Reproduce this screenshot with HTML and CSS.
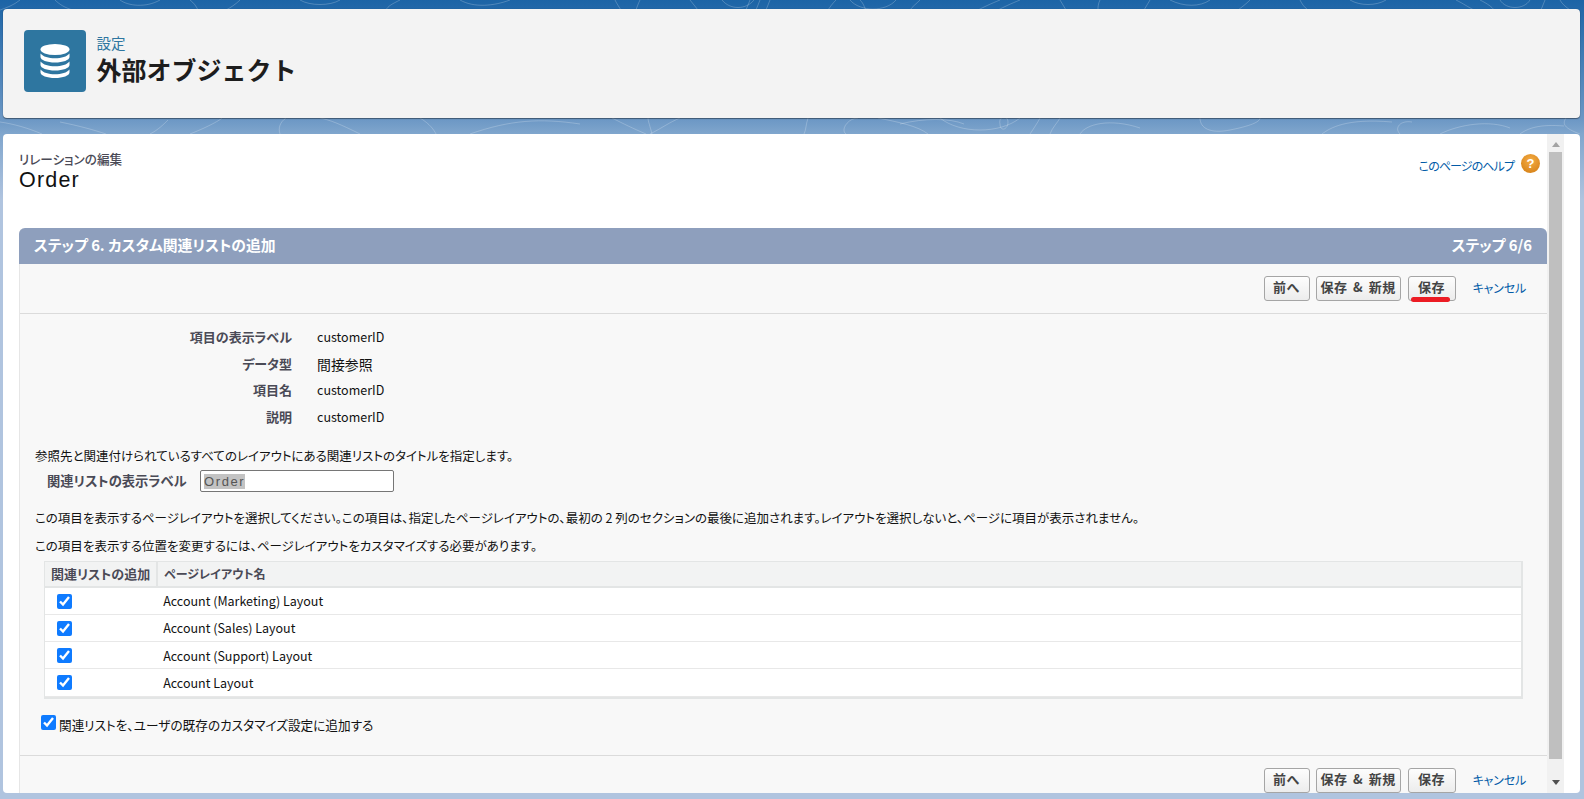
FILE: index.html
```html
<!DOCTYPE html>
<html lang="ja">
<head>
<meta charset="utf-8">
<title>外部オブジェクト</title>
<link rel="stylesheet" href="styles.css">
</head>
<body>
<svg class="swirls" width="1584" height="140" viewBox="0 0 1584 140" fill="none" stroke="#fff" stroke-opacity=".22" stroke-width="1">
  <path d="M20 0c-6 5-14 8-20 10M55 0c4 4 10 8 18 10M120 0c8 6 26 8 40 0M190 0c4 3 6 6 8 10M240 0c-4 4-10 8-14 10M300 0c10 6 30 6 40 0M400 0c-8 4-12 6-14 10M460 0c14 8 34 6 50 0M615 0c2 4 4 7 6 10M640 0c-2 4-3 7-4 10M690 0l8 10M722 0c8 10 24 10 32 0M750 0l-4 10M760 0l-4 10M770 0l-4 10M836 0c-4 4-6 7-8 10M860 0c4 4 4 7 6 10M850 0c10 12 36 12 46 0M920 0c-4 4-8 7-10 10M1000 0c-10 4-16 7-22 10M1020 0c-10 4-16 7-22 10M1060 0l6 10M1100 0c-2 4-2 7-2 10M1150 0l-6 10M1170 0c14 7 30 7 40 0M1250 0c-4 4-8 7-12 10M1300 0c2 4 4 7 8 10M1350 0c10 6 26 6 36 0M1456 0c8 4 12 7 18 10M1480 0c8 4 12 7 14 10M1500 0c6 10 24 10 30 0M1545 0l-4 10M1560 0c2 4 6 7 10 10"/>
  <path d="M0 122c14 2 28 6 42 12M60 122c20 4 34 8 46 12M150 134c8-4 14-10 18-14M190 134c20-8 30-14 32-16M280 134c-2-6 0-12 6-16M360 134c-20-10-30-14-40-16M420 118c10 6 14 12 16 16M470 134c40-14 70-16 110-10M612 118c12 6 20 10 34 16M648 118c0 3 2 8 4 16M680 118c-10 4-18 10-30 16M808 118c-2 6-2 12-4 16M846 134c-6-4 2-16 12-16M878 118c20 4 40 8 50 16M900 124c24-6 50-6 64 0M1000 124c-2-8 8-10 8-2s-8 10-8 2zM940 118c20 16 60 16 80 0M1030 134c4-6 8-12 10-16M1050 134c2-6 8-12 10-16M1080 134c6-10 30-16 60-6M1200 118c0 10 10 16 30 12s30-8 30-12M1322 134c8-6 24-16 70-12M1400 134c-6-6 0-14 12-12M1440 134c20-10 50-14 70-6M1520 134c8-6 20-10 44-8M1566 118c-4 6-2 10 14 16"/>
</svg>
<header class="page-head">
  <div class="app-icon">
    <svg width="32" height="36" viewBox="0 0 32 36" fill="#fff">
      <ellipse cx="16" cy="6.500" rx="14.500" ry="5.500"/>
      <path d="M1.500 10.500v3.500c0 3 6.500 5.500 14.500 5.500s14.500-2.500 14.500-5.500v-3.500c-2.500 3.200-8 4.800-14.500 4.800s-12-1.600-14.500-4.800z"/>
      <path d="M1.500 18.500v3.500c0 3 6.500 5.500 14.500 5.500s14.500-2.500 14.500-5.500v-3.500c-2.500 3.200-8 4.800-14.500 4.800s-12-1.600-14.500-4.800z"/>
      <path d="M1.500 26.500v3c0 3 6.500 5.500 14.500 5.500s14.500-2.500 14.500-5.500v-3c-2.500 3.200-8 4.800-14.500 4.800s-12-1.600-14.500-4.800z"/>
    </svg>
  </div>
  <div class="head-text">
    <a class="crumb">設定</a>
    <h1 class="head-title">外部オブジェクト</h1>
  </div>
</header>
<main class="content-card">
  <div class="scroll-view">
    <div class="title-row">
      <div>
        <div class="title-sub">リレーションの編集</div>
        <div class="title-main">Order</div>
      </div>
      <div class="help">
        <a class="link help-link">このページのヘルプ</a>
        <span class="help-icon">?</span>
      </div>
    </div>
    <section class="panel">
      <div class="panel-bar">
        <span>ステップ 6. カスタム関連リストの追加</span>
        <span>ステップ 6/6</span>
      </div>
      <div class="toolbar toolbar-top">
        <button class="btn btn-prev">前へ</button>
        <button class="btn btn-new">保存 &amp; 新規</button>
        <button class="btn btn-save">保存<span class="red-mark"></span></button>
        <a class="link cancel">キャンセル</a>
      </div>
      <div class="panel-body">
        <dl class="info">
          <dt>項目の表示ラベル</dt><dd>customerID</dd>
          <dt>データ型</dt><dd class="kanji">間接参照</dd>
          <dt>項目名</dt><dd>customerID</dd>
          <dt>説明</dt><dd>customerID</dd>
        </dl>
        <p class="note note-first">参照先と関連付けられているすべてのレイアウトにある関連リストのタイトルを指定します。</p>
        <div class="field">
          <label class="field-label">関連リストの表示ラベル</label>
          <div class="text-input"><span class="selected">Order</span></div>
        </div>
        <p class="note note-a">この項目を表示するページレイアウトを選択してください。この項目は、指定したページレイアウトの、最初の 2 列のセクションの最後に追加されます。レイアウトを選択しないと、ページに項目が表示されません。</p>
        <p class="note note-b">この項目を表示する位置を変更するには、ページレイアウトをカスタマイズする必要があります。</p>
        <div class="table-wrap">
          <table class="layouts">
            <thead><tr><th class="col-a">関連リストの追加</th><th>ページレイアウト名</th></tr></thead>
            <tbody>
              <tr><td><input class="check" type="checkbox" checked></td><td>Account (Marketing) Layout</td></tr>
              <tr><td><input class="check" type="checkbox" checked></td><td>Account (Sales) Layout</td></tr>
              <tr><td><input class="check" type="checkbox" checked></td><td>Account (Support) Layout</td></tr>
              <tr><td><input class="check" type="checkbox" checked></td><td>Account Layout</td></tr>
            </tbody>
          </table>
        </div>
        <div class="add-row">
          <input class="check" type="checkbox" checked>
          <span>関連リストを、ユーザの既存のカスタマイズ設定に追加する</span>
        </div>
      </div>
      <div class="toolbar toolbar-bottom">
        <button class="btn btn-prev">前へ</button>
        <button class="btn btn-new">保存 &amp; 新規</button>
        <button class="btn btn-save">保存</button>
        <a class="link cancel">キャンセル</a>
      </div>
    </section>
  </div>
  <div class="scrollbar">
    <span class="arrow-up"></span>
    <div class="thumb"></div>
    <span class="arrow-down"></span>
  </div>
</main>
</body>
</html>
```
FILE: styles.css
```css
* { box-sizing: border-box; }
html, body { height: 100%; }
body {
  margin: 0;
  height: 799px;
  overflow: hidden;
  position: relative;
  padding: 9px 4px 6px 3px;
  display: flex;
  flex-direction: column;
  gap: 16px;
  background: linear-gradient(180deg, #1c64a6 0, #6a96c4 118px, #80a6cd 134px, #b0c4df 200px);
  font-family: "Noto Sans CJK JP", "Liberation Sans", sans-serif;
  font-feature-settings: "palt";
  font-size: 12.500px;
  color: #222;
}
.swirls { position: absolute; left: 0; top: 0; }
.page-head {
  position: relative;
  flex: 0 0 109px;
  background: #f3f3f3;
  border-radius: 4px;
  box-shadow: 0 1px 1px rgba(0,0,0,.4), 0 0 1px rgba(0,0,0,.3);
  display: flex;
  align-items: center;
  padding: 0 21px 5px;
  gap: 10.500px;
}
.app-icon {
  width: 62px;
  height: 62px;
  border-radius: 4px;
  background: #2e76a0;
  display: flex;
  align-items: center;
  justify-content: center;
}
.head-text { display: flex; flex-direction: column; margin-bottom: 2px; }
.crumb { color: #2e76a0; font-size: 14.500px; line-height: 18px; }
.head-title { margin: 0; font-size: 25px; line-height: 34px; font-weight: 700; color: #1d1d1d; font-feature-settings: normal; }
.content-card {
  position: relative;
  flex: 1;
  min-height: 0;
  background: #fff;
  border-radius: 4px;
  display: flex;
  padding-right: 33px;
  overflow: hidden;
}
.scroll-view { flex: 1; min-width: 0; overflow: hidden; padding: 17px 0 0 16px; }
.title-row { display: flex; justify-content: space-between; height: 77px; padding-right: 7px; }
.title-sub { font-size: 12.600px; line-height: 16px; font-weight: 500; color: #4a4a56; }
.title-main { font: 21.500px/27px "Liberation Sans", sans-serif; letter-spacing: 1.200px; color: #111; }
.help { display: flex; align-items: flex-start; gap: 7px; padding-top: 3px; }
.help .help-link { font-size: 12px; line-height: 24px; letter-spacing: -.9px; }
.help-icon {
  width: 19px; height: 19px; border-radius: 50%;
  background: radial-gradient(circle at 50% 35%, #f5ad45, #d17a10);
  color: #fff; font: 700 13px/19px "Liberation Sans", sans-serif; text-align: center;
}
.link { color: #015ba7; }
.panel {
  background: #f8f8f8;
  border-left: 1px solid #e6e6e6;
  border-radius: 6px 6px 0 0;
}
.panel-bar {
  height: 36px;
  margin-left: -1px;
  background: #8e9fbd;
  border-radius: 6px 6px 0 0;
  display: flex;
  align-items: center;
  justify-content: space-between;
  padding: 0 15px 3px;
  color: #fff;
  font-size: 14.800px;
  font-weight: 700;
}
.toolbar { display: flex; align-items: flex-start; gap: 6px; justify-content: flex-end; padding-right: 21px; }
.toolbar-top { height: 50px; padding-top: 12px; border-bottom: 1px solid #dbdbdb; }
.toolbar-bottom { padding-top: 12px; height: 60px; border-top: 1px solid #dbdbdb; }
.btn {
  position: relative;
  height: 25px;
  padding: 0 0 3px;
  border: 1px solid #a5a5a5;
  border-radius: 3px;
  background: linear-gradient(#fdfdfd, #ececec);
  font: 700 13px/20px "Noto Sans CJK JP", "Liberation Sans", sans-serif;
  color: #444;
  letter-spacing: .5px;
  word-spacing: 2px;
}
.btn-prev { width: 46px; }
.btn-new { width: 85px; margin-right: 1px; }
.btn-save { width: 48px; }
.red-mark {
  position: absolute; left: 2px; right: 5px; bottom: -2px; height: 5px;
  background: #ec1c24; border-radius: 3px;
}
.cancel { margin-left: 11px; font-size: 12px; line-height: 23px; letter-spacing: -.2px; }
.panel-body { padding: 10px 24px 0 15px; }
.info { margin: 0; display: grid; grid-template-columns: 257px 1fr; column-gap: 25px; row-gap: 0; }
.info dt { text-align: right; font-size: 13px; font-weight: 700; color: #4a4a56; line-height: 26.700px; }
.info dd { margin: 0; line-height: 26.700px; color: #111; }
.info .kanji { font-size: 13.900px; font-feature-settings: normal; }
.note { margin: 0; line-height: 18px; color: #111; }
.note-first { margin-top: 16px; }
.field { display: flex; align-items: center; margin-top: 4px; height: 24px; }
.field-label { margin-left: 12px; width: 153px; font-size: 13.300px; font-weight: 700; color: #4a4a56; }
.text-input {
  width: 194px; height: 22px; background: #fff; border: 1px solid #767676; border-radius: 2px;
  padding: 2px 3px 0; font: 13px/18px "Liberation Sans", sans-serif; letter-spacing: 1.600px; color: #555;
}
.selected { background: #c3c3c3; }
.note-a { margin-top: 16px; }
.note-b { margin-top: 10px; }
.table-wrap { margin: 6px 0 0 9px; border: 1px solid #e3e5e5; border-width: 1px 2px 2px 1px; }
.layouts { width: 100%; border-collapse: collapse; background: #fff; }
.layouts th {
  height: 25px; padding: 0 6px; text-align: left; background: #f2f3f3; font-size: 12px;
  font-weight: 700; color: #4a4a56; border-bottom: 2px solid #e3e5e5;
}
.layouts th.col-a { width: 112px; font-size: 13px; white-space: nowrap; border-right: 2px solid #e3e5e5; }
.layouts td { height: 27.300px; padding: 0 6px; border-bottom: 1px solid #e8e8e8; color: #111; }
.check { width: 15px; height: 15px; margin: 1px 0 0 6px; accent-color: #0f7bff; display: block; }
.add-row { display: flex; align-items: flex-start; gap: 3px; margin: 15px 0 0 6px; height: 41px; line-height: 22px; font-size: 12.650px; color: #111; }
.add-row .check { margin: 1px 0 0 0; }
.scrollbar {
  position: absolute; right: 16px; top: 0; bottom: 0; width: 17px;
  background: #f1f1f1;
  display: flex; flex-direction: column; align-items: center;
}
.thumb { width: 13px; flex: 1; background: #bfbfbf; margin: 5px 0 34px; }
.arrow-up { margin-top: 8px; border: 4px solid transparent; border-top: 0; border-bottom: 5px solid #a3a3a3; }
.arrow-down { position: absolute; bottom: 8px; border: 4px solid transparent; border-bottom: 0; border-top: 5px solid #505050; }
```
